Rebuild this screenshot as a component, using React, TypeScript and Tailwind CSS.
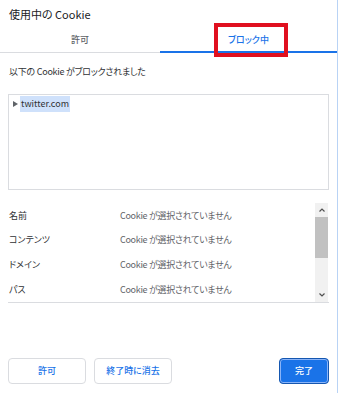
import React from "react";

const font = { fontFamily: '"Noto Sans CJK JP", "Noto Sans", sans-serif' };

export default function App() {
  const rows = ["名前", "コンテンツ", "ドメイン", "パス"];
  return (
    <div className="w-[340px] h-[393px] bg-white overflow-hidden [font-feature-settings:'palt']" style={font}>
      <div className="w-[338px] h-[393px] border-r border-[#b9d3f5] flex flex-col relative">
        <div className="h-[30px] pl-[9px] pt-[6px] text-[11px] leading-[16px] text-[#202124]">使用中の Cookie</div>
        <div className="flex h-[23px]">
          <div className="w-[160px] flex items-start justify-center pt-[4px] border-b border-[#dadce0] text-[9px] leading-[12px] font-medium text-[#5f6368]">許可</div>
          <div className="flex-1 flex items-start justify-center pt-[4px] border-b-2 border-[#1a73e8] text-[9px] leading-[12px] font-medium text-[#1a73e8]">ブロック中</div>
        </div>
        <div className="absolute left-[214px] top-[23px] w-[74px] h-[34px] border-[4px] border-[#e0101f]" />
        <div className="pl-[9px] pt-[13px] h-[41px] text-[9px] leading-[12px] tracking-[-0.25px] text-[#303134]">以下の Cookie がブロックされました</div>
        <div className="mx-[8px] h-[96px] border border-[#dadce0] pt-[1px] pl-[4px]">
          <div className="flex items-center h-[16px]">
            <span className="w-[7px] h-[7px] flex items-center">
              <svg width="5" height="6" viewBox="0 0 5 6"><path d="M0 0 L5 3 L0 6 Z" fill="#5f6368" /></svg>
            </span>
            <span className="bg-[#cfe1fb] h-[16px] px-[1px] text-[9px] leading-[16px] text-[#303134]">twitter.com</span>
          </div>
        </div>
        <div className="mx-[8px] mt-[13px] h-[100px] border-b border-[#dadce0] flex">
          <div className="flex-1 flex flex-col">
            {rows.map((r) => (
              <div key={r} className="h-[25px] flex items-center text-[9px] text-[#303134]">
                <span className="w-[112px] pl-[1px]">{r}</span>
                <span className="text-[#5f6368] tracking-[-0.3px]">Cookie が選択されていません</span>
              </div>
            ))}
          </div>
          <div className="w-[13px] bg-[#f1f1f1] flex flex-col items-center">
            <div className="h-[14px] flex items-center justify-center">
              <svg width="6" height="4" viewBox="0 0 6 4"><path d="M0.5 3.5 L3 1 L5.5 3.5" stroke="#505050" strokeWidth="1.2" fill="none" /></svg>
            </div>
            <div className="w-[13px] h-[41px] bg-[#c1c1c1]" />
            <div className="flex-1" />
            <div className="h-[14px] flex items-center justify-center">
              <svg width="6" height="4" viewBox="0 0 6 4"><path d="M0.5 0.5 L3 3 L5.5 0.5" stroke="#505050" strokeWidth="1.2" fill="none" /></svg>
            </div>
          </div>
          <div className="w-[1px]" />
        </div>
        <div className="flex-1" />
        <div className="flex items-center pl-[8px] pr-[8px] pb-[9px]">
          <button className="w-[78px] h-[26px] border border-[#dadce0] rounded-[4px] text-[9px] font-medium text-[#1a73e8] bg-white">許可</button>
          <button className="ml-[8px] w-[78px] h-[26px] border border-[#dadce0] rounded-[4px] text-[9px] font-medium text-[#1a73e8] bg-white">終了時に消去</button>
          <div className="flex-1" />
          <button className="w-[50px] h-[26px] rounded-[4px] border border-[#1557b0] shadow-[inset_0_0_0_1px_#8ab4f8] text-[9px] font-medium text-white bg-[#1a73e8]">完了</button>
        </div>
      </div>
    </div>
  );
}
